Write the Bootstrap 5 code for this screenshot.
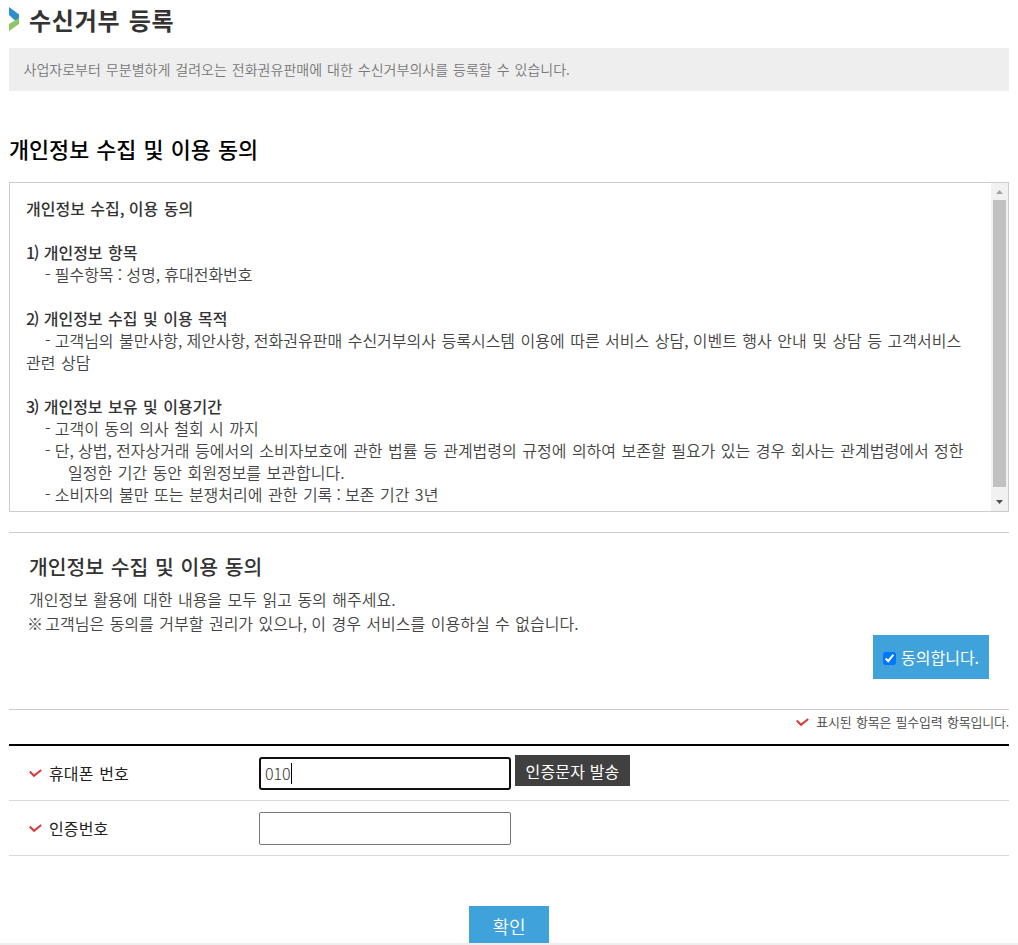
<!DOCTYPE html>
<html lang="ko">
<head>
<meta charset="utf-8">
<meta name="viewport" content="width=device-width, initial-scale=1">
<title>수신거부 등록</title>
<link rel="stylesheet" href="https://cdn.jsdelivr.net/npm/bootstrap@5.3.0/dist/css/bootstrap.min.css">
<style>
  body { font-family: "Noto Sans CJK KR", sans-serif; font-size: 16px; font-weight: 350; line-height: 22px; color: #444; word-spacing: .0625em; overflow: hidden; height: 945px; }
  .page { width: 1000px; margin-left: 9px; }
  .page-title { height: 48px; gap: 9px; }
  .page-title svg { margin-top: 7px; }
  .page-title h1 { font-size: 24px; font-weight: 700; line-height: 40px; color: #333; letter-spacing: .75px; }
  .intro { height: 43px; line-height: 42px; padding-left: 14.5px; font-size: 14px; background: #eee; color: #777; letter-spacing: .02px; }
  .section-title { margin-top: 41px; height: 50px; line-height: 34px; font-size: 21.8px; font-weight: 500; color: #000; }
  .terms { height: 330px; border: 1px solid #ccc; }
  .terms-text { padding: 14px 0 0 16px; white-space: nowrap; }
  .terms-text p { margin: 0 0 22px; }
  .terms-text strong { font-weight: 500; color: #333; }
  .tight { letter-spacing: -1.3px; }
  .in1 { padding-left: 19px; }
  .in2 { padding-left: 42px; }
  .track { width: 17px; background: #f1f1f1; }
  .thumb { width: 13px; height: 287px; background: #c1c1c1; }
  .agree { margin-top: 20px; height: 178px; padding: 19px 20px 20px; border-top: 1px solid #ccc; border-bottom: 1px solid #ccc; }
  .agree h2 { font-size: 20.4px; font-weight: 500; line-height: 28px; margin-bottom: 7px; color: #333; }
  .agree p { line-height: 24px; }
  .mark-ref { margin-left: -2px; letter-spacing: -1.6px; }
  .agree-btn { width: 116px; height: 44px; padding-left: 10px; gap: 5px; background: #3fa2db; color: #fff; font-weight: 400; }
  .agree-btn input { width: 13px; height: 13px; margin: 2px 0 0; }
  .required-note { height: 34px; font-size: 13px; line-height: 24px; letter-spacing: -.22px; white-space: nowrap; gap: 7px; }
  .form-rows { border-top: 2px solid #000; }
  .field-row { height: 55px; border-bottom: 1px solid #d9d9d9; }
  .field-name { width: 250px; padding-left: 20px; gap: 7px; font-weight: 400; letter-spacing: .15px; color: #222; }
  .field-box { width: 252px; height: 33px; border: 1px solid #767676; border-radius: 2px; padding: 0 5px; background: #fff; font-weight: 300; color: #333; }
  .field-box.active { border: 2px solid #101010; border-radius: 3px; padding: 0 4px; }
  .caret { width: 1px; height: 21px; background: #000; }
  .send-btn { width: 115px; height: 31px; margin: -5px 0 0 4px; background: #404040; color: #fff; font-weight: 400; letter-spacing: .15px; }
  .ok-btn { width: 80px; height: 37px; margin-top: 50px; background: #3fa2db; color: #fff; font-size: 18px; font-weight: 350; padding-top: 4px; }
  .bottom-line { height: 2px; background: #eee; }
</style>
</head>
<body>
<main class="page">
  <header class="page-title d-flex align-items-start">
    <svg width="11" height="25" viewBox="0 0 11 25"><path fill="#2f8fcb" d="M0 0 10 7.5V12L6.5 14 0 8z"/><path fill="#8cc665" d="M10 11V17L0 24V17z"/></svg>
    <h1 class="mb-0">수신거부 등록</h1>
  </header>
  <div class="intro">사업자로부터 무분별하게 걸려오는 전화권유판매에 대한 수신거부의사를 등록할 수 있습니다.</div>

  <h2 class="section-title mb-0">개인정보 수집 및 이용 동의</h2>
  <section class="terms d-flex justify-content-between">
    <div class="terms-text">
      <p><strong>개인정보 수집<span class="tight">,</span> 이용 동의</strong></p>
      <p><strong><span class="tight">1)</span> 개인정보 항목</strong><br><span class="in1"><span class="tight">-</span> 필수항목<span class="tight"> :</span> 성명<span class="tight">,</span> 휴대전화번호</span></p>
      <p><strong><span class="tight">2)</span> 개인정보 수집 및 이용 목적</strong><br><span class="in1"><span class="tight">-</span> 고객님의 불만사항<span class="tight">,</span> 제안사항<span class="tight">,</span> 전화권유판매 수신거부의사 등록시스템 이용에 따른 서비스 상담<span class="tight">,</span> 이벤트 행사 안내 및 상담 등 고객서비스</span><br>관련 상담</p>
      <p class="mb-0"><strong><span class="tight">3)</span> 개인정보 보유 및 이용기간</strong><br><span class="in1"><span class="tight">-</span> 고객이 동의 의사 철회 시 까지</span><br><span class="in1"><span class="tight">-</span> 단<span class="tight">,</span> 상법<span class="tight">,</span> 전자상거래 등에서의 소비자보호에 관한 법률 등 관계법령의 규정에 의하여 보존할 필요가 있는 경우 회사는 관계법령에서 정한</span><br><span class="in2">일정한 기간 동안 회원정보를 보관합니다.</span><br><span class="in1"><span class="tight">-</span> 소비자의 불만 또는 분쟁처리에 관한 기록<span class="tight"> :</span> 보존 기간 3년</span></p>
    </div>
    <div class="track d-flex flex-column align-items-center flex-shrink-0">
      <svg class="flex-shrink-0" width="17" height="17"><path fill="#a3a3a3" d="M5 11 8.5 7 12 11z"/></svg>
      <div class="thumb"></div>
      <svg class="mt-auto flex-shrink-0" width="17" height="17"><path fill="#505050" d="M5 6H12L8.5 10z"/></svg>
    </div>
  </section>

  <section class="agree d-flex flex-column">
    <h2>개인정보 수집 및 이용 동의</h2>
    <p class="mb-0">개인정보 활용에 대한 내용을 모두 읽고 동의 해주세요.<br><span class="mark-ref">※ </span>고객님은 동의를 거부할 권리가 있으나<span class="tight">,</span> 이 경우 서비스를 이용하실 수 없습니다.</p>
    <label class="agree-btn d-flex align-items-center align-self-end text-nowrap"><input class="flex-shrink-0" type="checkbox" checked><span>동의합니다.</span></label>
  </section>

  <div class="required-note d-flex justify-content-end">
    <svg class="mt-2" width="13" height="9" viewBox="0 0 13 9"><path d="M.8 2.5 5 6.8 12.2 1" fill="none" stroke="#d93a3a" stroke-width="2"/></svg>
    <span>표시된 항목은 필수입력 항목입니다.</span>
  </div>
  <form class="form-rows">
    <div class="field-row d-flex align-items-center">
      <div class="field-name d-flex align-items-center"><svg width="13" height="9" viewBox="0 0 13 9"><path d="M.8 2.5 5 6.8 12.2 1" fill="none" stroke="#d93a3a" stroke-width="2"/></svg><span>휴대폰 번호</span></div>
      <div class="field-box active d-flex align-items-center"><span>010</span><span class="caret"></span></div>
      <button type="button" class="send-btn border-0 p-0">인증문자 발송</button>
    </div>
    <div class="field-row d-flex align-items-center">
      <div class="field-name d-flex align-items-center"><svg width="13" height="9" viewBox="0 0 13 9"><path d="M.8 2.5 5 6.8 12.2 1" fill="none" stroke="#d93a3a" stroke-width="2"/></svg><span>인증번호</span></div>
      <div class="field-box"></div>
    </div>
    <button type="button" class="ok-btn d-block mx-auto border-0">확인</button>
  </form>
</main>
<div class="bottom-line"></div>
<script src="https://cdn.jsdelivr.net/npm/bootstrap@5.3.0/dist/js/bootstrap.bundle.min.js"></script>
</body>
</html>
